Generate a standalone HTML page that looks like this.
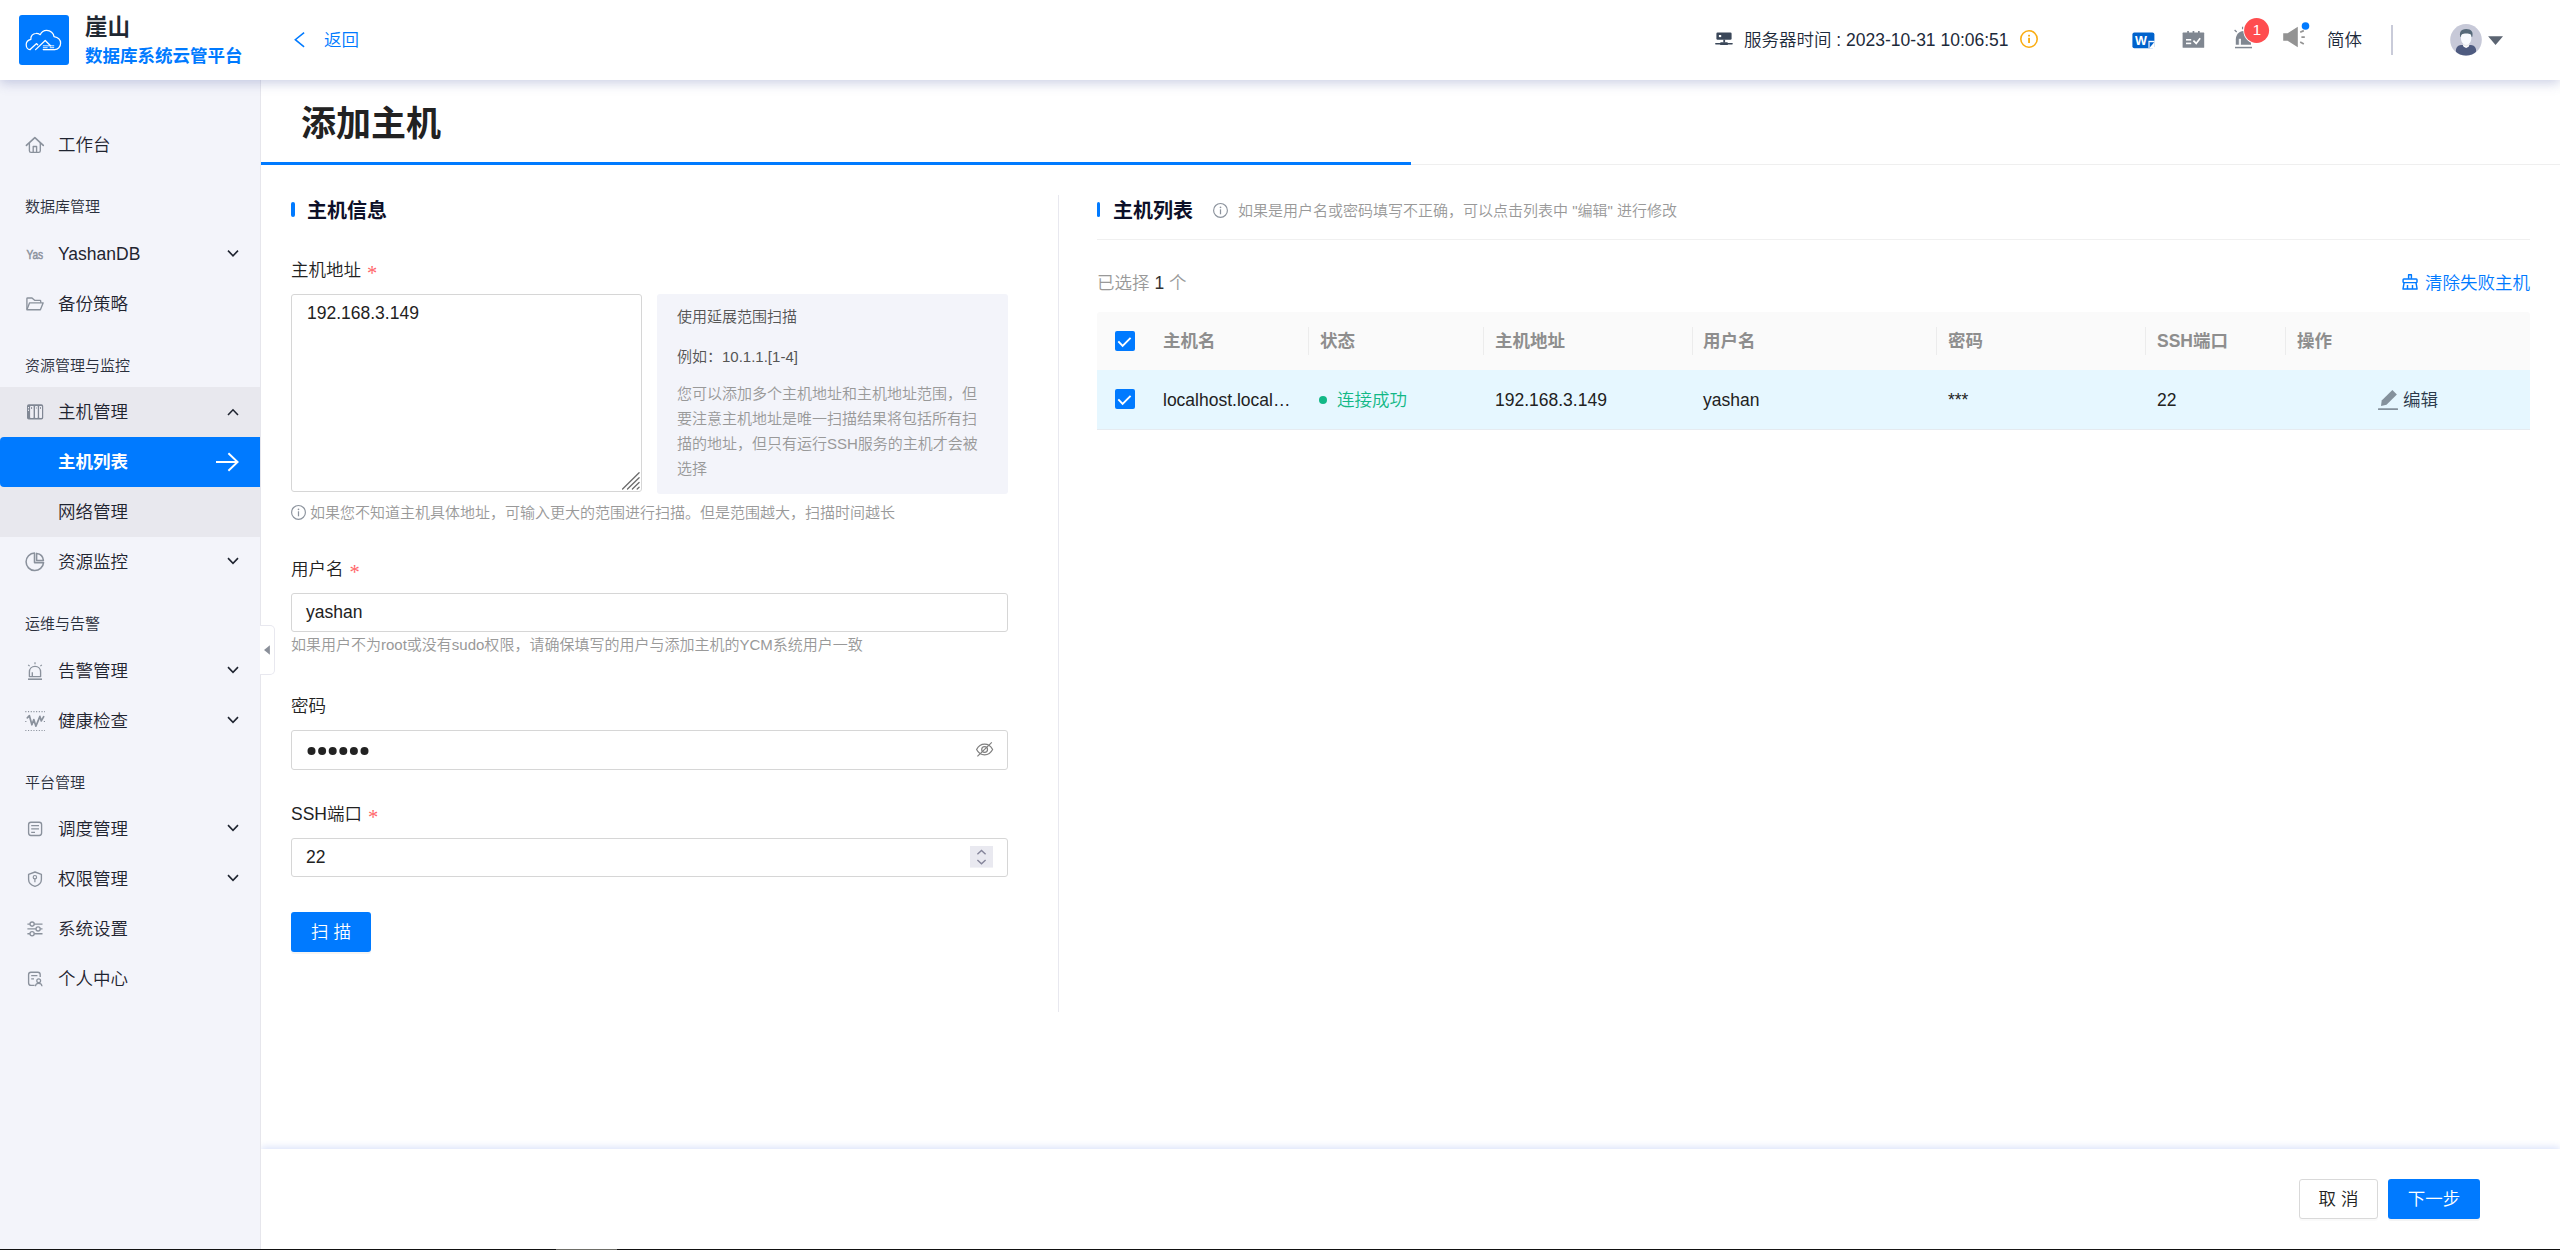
<!DOCTYPE html>
<html lang="zh-CN">
<head>
<meta charset="utf-8">
<title>添加主机</title>
<style>
*{box-sizing:border-box;margin:0;padding:0}
html,body{width:2560px;height:1250px;overflow:hidden;background:#fff}
body{position:relative;font-weight:350;font-family:"Liberation Sans","Noto Sans CJK SC",sans-serif;font-size:17.5px;color:#222;line-height:1}
.abs{position:absolute}
.t{position:absolute;white-space:nowrap;line-height:26px;height:26px}
svg{display:block;position:absolute;overflow:visible}
/* header */
#hd{position:absolute;left:0;top:0;width:2560px;height:80px;background:#fff;box-shadow:0 3px 11px rgba(84,95,165,.30);z-index:20}
#logo{position:absolute;left:19px;top:15px;width:50px;height:50px;border-radius:3px;background:#007aff}
/* sidebar */
#sb{position:absolute;left:0;top:80px;width:261px;height:1169px;background:#f3f4fa;border-right:1px solid #e6e6ec;z-index:12}
.mi{position:absolute;left:58px;font-size:17.5px;color:#1f2430;white-space:nowrap;height:26px;line-height:26px}
.gt{position:absolute;left:25px;font-size:15px;color:#2a2f3c;white-space:nowrap;height:22px;line-height:22px}
.ic{position:absolute;left:26px;width:18px;height:18px}
/* main */
#main{position:absolute;left:261px;top:80px;width:2299px;height:1169px;background:#fff}
.lbl{position:absolute;left:291px;font-size:17.5px;color:#222;white-space:nowrap;height:26px;line-height:26px}
.req{color:#ff6669;font-family:"Liberation Serif","Noto Serif CJK SC",serif;font-size:20.5px;margin-left:6px;position:relative;top:3.5px;line-height:1}
.inp{position:absolute;left:291px;width:717px;height:40px;border:1px solid #d6d6d6;border-radius:3px;background:#fff}
.inp span{position:absolute;left:14px;top:5px;height:26px;line-height:26px;font-size:17.5px;color:#222}
.help{position:absolute;font-size:15px;color:#999;white-space:nowrap;height:22px;line-height:22px}
.th{position:absolute;top:328px;font-weight:bold;font-size:17.5px;color:#8e8e8e;height:26px;line-height:26px;white-space:nowrap}
.td{position:absolute;top:387px;font-size:17.5px;color:#222;height:26px;line-height:26px;white-space:nowrap}
.sep{position:absolute;top:327px;width:1px;height:28px;background:#ececec}
.cb{position:absolute;left:1115px;width:20px;height:20px;border-radius:2px;background:#007aff}
</style>
</head>
<body>

<!-- ================= HEADER ================= -->
<div id="hd">
  <div id="logo"></div>
  <div class="t" style="left:85px;top:13px;font-size:22.5px;font-weight:bold;color:#1f2833;height:30px;line-height:30px">崖山</div>
  <div class="t" style="left:85px;top:43px;font-size:17.5px;font-weight:bold;color:#007aff">数据库系统云管平台</div>
  <div class="t" style="left:324px;top:27px;color:#007aff">返回</div>
  <div class="t" style="left:1744px;top:27px;color:#1d2a3a">服务器时间 : 2023-10-31 10:06:51</div>
  <div class="t" style="left:2327px;top:27px;color:#1d2a3a">简体</div>
  <div class="abs" style="left:2391px;top:25px;width:2px;height:30px;background:#c9cbd9"></div>
</div>

<!-- ================= SIDEBAR ================= -->
<div id="sb">
  <div class="abs" style="left:0;top:307px;width:260px;height:150px;background:#e8e8ee"></div>
  <div class="abs" style="left:0;top:357px;width:260px;height:50px;background:#007aff;border-radius:4px 0 0 4px"></div>

  <div class="mi" style="top:52px">工作台</div>
  <div class="gt" style="top:116px">数据库管理</div>
  <div class="mi" style="top:161px">YashanDB</div>
  <div class="mi" style="top:211px">备份策略</div>
  <div class="gt" style="top:275px">资源管理与监控</div>
  <div class="mi" style="top:319px">主机管理</div>
  <div class="mi" style="top:369px;color:#fff;font-weight:bold">主机列表</div>
  <div class="mi" style="top:419px">网络管理</div>
  <div class="mi" style="top:469px">资源监控</div>
  <div class="gt" style="top:533px">运维与告警</div>
  <div class="mi" style="top:578px">告警管理</div>
  <div class="mi" style="top:628px">健康检查</div>
  <div class="gt" style="top:692px">平台管理</div>
  <div class="mi" style="top:736px">调度管理</div>
  <div class="mi" style="top:786px">权限管理</div>
  <div class="mi" style="top:836px">系统设置</div>
  <div class="mi" style="top:886px">个人中心</div>
</div>

<!-- collapse tab -->
<div class="abs" style="left:260px;top:625px;width:15px;height:50px;background:#fff;border:1px solid #e8e8ef;border-left:none;border-radius:0 5px 5px 0;z-index:13"></div>

<!-- ================= MAIN ================= -->
<div id="main"></div>
<div class="t" style="left:301px;top:99px;font-size:35px;font-weight:bold;color:#222;height:50px;line-height:50px">添加主机</div>
<div class="abs" style="left:1411px;top:164px;width:1149px;height:1px;background:#efefef"></div>
<div class="abs" style="left:261px;top:162px;width:1150px;height:3px;background:#007aff"></div>

<!-- left form -->
<div class="abs" style="left:291px;top:202px;width:4px;height:15px;border-radius:2px;background:#007aff"></div>
<div class="t" style="left:307px;top:196px;font-size:20px;font-weight:bold;color:#0d1029;height:30px;line-height:30px">主机信息</div>

<div class="lbl" style="top:257px">主机地址<span class="req">*</span></div>
<div class="abs" style="left:291px;top:294px;width:351px;height:198px;border:1px solid #d6d6d6;border-radius:3px;background:#fff">
  <span class="t" style="left:15px;top:5px;color:#222">192.168.3.149</span>
</div>
<div class="abs" style="left:657px;top:294px;width:351px;height:200px;border-radius:3px;background:#f3f4fa">
  <div class="help" style="left:20px;top:12px;color:#555">使用延展范围扫描</div>
  <div class="help" style="left:20px;top:52px;color:#555">例如：10.1.1.[1-4]</div>
  <div class="abs" style="left:20px;top:87px;width:311px;font-size:15px;line-height:25px;color:#999">您可以添加多个主机地址和主机地址范围，但要注意主机地址是唯一扫描结果将包括所有扫描的地址，但只有运行SSH服务的主机才会被选择</div>
</div>
<div class="help" style="left:310px;top:502px">如果您不知道主机具体地址，可输入更大的范围进行扫描。但是范围越大，扫描时间越长</div>

<div class="lbl" style="top:556px">用户名<span class="req">*</span></div>
<div class="inp" style="top:593px;height:39px"><span>yashan</span></div>
<div class="help" style="left:291px;top:634px">如果用户不为root或没有sudo权限，请确保填写的用户与添加主机的YCM系统用户一致</div>

<div class="lbl" style="top:693px">密码</div>
<div class="inp" style="top:730px"></div>

<div class="lbl" style="top:801px">SSH端口<span class="req">*</span></div>
<div class="inp" style="top:838px;height:39px"><span>22</span></div>

<div class="abs" style="left:291px;top:912px;width:80px;height:40px;border-radius:3px;background:#007aff;box-shadow:0 2px 0 rgba(0,0,0,.045);color:#fff;text-align:center;line-height:40px;font-size:17.5px">扫 描</div>

<div class="abs" style="left:1058px;top:195px;width:1px;height:817px;background:#e8e8ef"></div>

<!-- right panel -->
<div class="abs" style="left:1097px;top:202px;width:3px;height:15px;border-radius:2px;background:#007aff"></div>
<div class="t" style="left:1113px;top:196px;font-size:20px;font-weight:bold;color:#0d1029;height:30px;line-height:30px">主机列表</div>
<div class="help" style="left:1238px;top:200px">如果是用户名或密码填写不正确，可以点击列表中 "编辑" 进行修改</div>
<div class="abs" style="left:1097px;top:239px;width:1433px;height:1px;background:#f0f0f0"></div>
<div class="t" style="left:1097px;top:270px;color:#999">已选择 <span style="color:#333">1</span> 个</div>
<div class="t" style="left:2425px;top:270px;color:#007aff">清除失败主机</div>

<div class="abs" style="left:1097px;top:312px;width:1433px;height:58px;background:#fafafa;border-radius:3px 3px 0 0"></div>
<div class="abs" style="left:1097px;top:370px;width:1433px;height:60px;background:#e6f7ff;border-bottom:1px solid #e6ebf0"></div>
<div class="cb" style="top:331px"></div>
<div class="cb" style="top:389px"></div>
<div class="th" style="left:1163px">主机名</div>
<div class="th" style="left:1320px">状态</div>
<div class="th" style="left:1495px">主机地址</div>
<div class="th" style="left:1703px">用户名</div>
<div class="th" style="left:1948px">密码</div>
<div class="th" style="left:2157px">SSH端口</div>
<div class="th" style="left:2297px">操作</div>
<div class="sep" style="left:1308px"></div>
<div class="sep" style="left:1483px"></div>
<div class="sep" style="left:1692px"></div>
<div class="sep" style="left:1936px"></div>
<div class="sep" style="left:2145px"></div>
<div class="sep" style="left:2285px"></div>
<div class="td" style="left:1163px">localhost.local…</div>
<div class="abs" style="left:1319px;top:396px;width:8px;height:8px;border-radius:50%;background:#12b886"></div>
<div class="td" style="left:1337px;color:#12b886">连接成功</div>
<div class="td" style="left:1495px">192.168.3.149</div>
<div class="td" style="left:1703px">yashan</div>
<div class="td" style="left:1948px">***</div>
<div class="td" style="left:2157px">22</div>
<div class="td" style="left:2403px;color:#2c3a4a">编辑</div>

<!-- ================= FOOTER ================= -->
<div class="abs" style="left:261px;top:1149px;width:2299px;height:100px;background:#fff;box-shadow:0 -2px 7px rgba(70,110,230,.2);z-index:8"></div>
<div class="abs" style="left:2299px;top:1179px;width:79px;height:40px;border:1px solid #d9d9d9;border-radius:3px;background:#fff;box-shadow:0 2px 0 rgba(0,0,0,.02);color:#222;text-align:center;line-height:38px;z-index:9">取 消</div>
<div class="abs" style="left:2388px;top:1179px;width:92px;height:40px;border-radius:3px;background:#007aff;box-shadow:0 2px 0 rgba(0,0,0,.045);color:#fff;text-align:center;line-height:40px;z-index:9">下一步</div>
<div class="abs" style="left:0;top:1249px;width:2560px;height:1px;background:#111;z-index:30"></div>
<div class="abs" style="left:556px;top:1249px;width:61px;height:1px;background:#6e6e68;z-index:31"></div>

<!-- ================= ICON OVERLAY (page coordinates) ================= -->
<svg id="ov" width="2560" height="1250" viewBox="0 0 2560 1250" style="left:0;top:0;z-index:50;pointer-events:none" fill="none">
  <!-- logo cloud -->
  <g transform="translate(19,15)" stroke="#fff" stroke-width="1.25" stroke-linecap="round" stroke-linejoin="round">
    <path d="M11.1 34.6C8.6 34.6 7.2 32.2 7.2 29.8C7.2 27 9.2 24.9 11.9 24.3C11.6 21 13.8 18.6 16.8 18.5C18.6 18.4 20.2 19 21.2 19.7C22.4 17 24.8 15.4 27.7 15.4C31.6 15.4 34.6 18.2 35 21.6C38.8 22.2 41.6 24.8 41.6 28.3C41.6 31.8 39 34.6 35.8 34.6H24.3"/>
    <path d="M11.1 34.6L17.6 28.6L18.7 29.8M16.6 34.6L26.2 25.5L31.5 30.7" stroke-width="1.3"/>
    <path d="M24.3 30.8H34.8M24.3 32.7H28.2M31.2 32.7H34.8M24.3 34.6H35.8" stroke-width="0.9"/>
  </g>
  <!-- back arrow -->
  <path d="M304.1 32.6L295.3 39.7L304.1 46.8" stroke="#007aff" stroke-width="1.5"/>
  <!-- server icon -->
  <g fill="#3a4759">
    <rect x="1716.4" y="32.6" width="15.2" height="7.2" rx="1.2"/>
    <rect x="1723.3" y="39.6" width="1.8" height="3"/>
    <rect x="1720" y="42.2" width="8" height="2.9" rx="1.2"/>
    <rect x="1715.1" y="43" width="17.7" height="1.5" rx=".7"/>
    <rect x="1718.9" y="35" width="2.3" height="2.1" fill="#fff"/>
  </g>
  <!-- info orange -->
  <circle cx="2029" cy="39" r="8.2" stroke="#faad14" stroke-width="1.6"/>
  <rect x="2028.1" y="34.8" width="1.9" height="1.7" fill="#faad14"/>
  <rect x="2028.1" y="37.8" width="1.9" height="5.2" fill="#faad14"/>
  <!-- word icon -->
  <rect x="2132.4" y="32.6" width="22" height="15.6" rx="2" fill="#0062cc"/>
  <path d="M2148.4 48.4V40.8H2154.6V48.4Z" fill="#fff"/>
  <path d="M2149.8 42.2H2154.2L2149.8 47.6Z" fill="#0062cc"/>
  <rect x="2148.3" y="42" width="1.5" height="6.3" fill="#8fb5e8"/>
  <text x="2134.9" y="44.8" font-family="Liberation Sans, sans-serif" font-weight="bold" font-size="12.6" fill="#fff">W</text>
  <!-- calendar icon -->
  <g fill="#808791">
    <rect x="2182.6" y="32.6" width="21.6" height="15.2" rx=".6"/>
    <rect x="2187.2" y="31" width="1.7" height="2.4"/>
    <rect x="2192.6" y="31" width="1.7" height="2.4"/>
    <rect x="2198" y="31" width="1.7" height="2.4"/>
  </g>
  <rect x="2186" y="39" width="5.2" height="1.6" fill="#fff"/>
  <rect x="2186" y="42.6" width="5.2" height="1.6" fill="#fff"/>
  <path d="M2193.4 40.6L2196.2 43.4L2200.2 38.2" stroke="#fff" stroke-width="1.7"/>
  <!-- alarm (header) -->
  <g fill="#808791">
    <path d="M2235.8 44.8V39.5C2235.8 34.8 2239 31.2 2243.4 31C2247.8 31.2 2251 34.8 2251 39.5V44.8Z"/>
    <rect x="2235" y="46.8" width="17" height="1.5"/>
  </g>
  <rect x="2238.8" y="38.8" width="2.2" height="6.2" fill="#eef0f3"/>
  <path d="M2234.6 30L2236.7 31.9M2242.6 26.8V29.2" stroke="#808791" stroke-width="1.3"/>
  <circle cx="2256.6" cy="30.5" r="13.3" fill="#fff"/>
  <circle cx="2256.6" cy="30.5" r="12.5" fill="#ff4d4f"/>
  <!-- speaker -->
  <path d="M2283.2 33.2H2287.6L2297.8 26.8V47.2L2287.6 40.8H2283.2Z" fill="#939393"/>
  <path d="M2300.2 32.2L2303.8 30.6M2301.4 37.2H2304.8M2300.2 42L2303.8 44" stroke="#939393" stroke-width="1.7"/>
  <circle cx="2305.5" cy="26" r="3.8" fill="#007aff"/>
  <!-- avatar -->
  <g>
    <circle cx="2466" cy="39.9" r="15.8" fill="#c7c9d8"/>
    <clipPath id="avc"><circle cx="2466" cy="39.9" r="15.6"/></clipPath>
    <g clip-path="url(#avc)">
      <path d="M2455.9 56V50.5C2455.9 47.5 2458 45.2 2461 45H2471C2474 45.2 2476.1 47.5 2476.1 50.5V56Z" fill="#4e5b80"/>
      <path d="M2462.6 44.5H2469.6L2468.6 46.8L2466.1 48L2463.6 46.8Z" fill="#fff"/>
      <path d="M2463.6 42.5H2468.8V45.4L2466.2 46.4L2463.6 45.4Z" fill="#e8eaec"/>
      <path d="M2461 36C2461 32.8 2463 31.5 2466.1 31.5C2469.3 31.5 2471.3 32.8 2471.3 36V38.5C2471.3 42 2469 44.8 2466.1 44.8C2463.3 44.8 2461 42 2461 38.5Z" fill="#f8fbff"/>
      <path d="M2460.3 37C2459.3 33 2460.3 29 2466.2 29C2471.5 29 2473.6 32 2472.2 37L2471.3 36.6C2471.5 34.5 2470.5 33.4 2466.2 33.4C2462.2 33.4 2460.9 34.5 2461.1 36.6Z" fill="#566a7a"/>
    </g>
  </g>
  <path d="M2488.1 36.2H2503L2495.55 45Z" fill="#5b6472"/>

  <!-- ===== sidebar icons ===== -->
  <g stroke="#8a919c" stroke-width="1.35" stroke-linejoin="round" stroke-linecap="butt">
    <!-- home -->
    <path d="M26.4 145.4L34.85 137.7L43.3 145.4" stroke-linecap="round" stroke-width="1.6"/>
    <path d="M29.4 143V150.8C29.4 151.8 30 152.4 31 152.4H38.7C39.7 152.4 40.3 151.8 40.3 150.8V143"/>
    <path d="M33.2 152.4V146.5H36.6V152.4"/>
    <!-- folder open -->
    <path d="M26.9 309.6V298.6C26.9 298.2 27.2 298 27.6 298H32L34.6 300.3H40C40.4 300.3 40.7 300.6 40.7 301V302.8"/>
    <path d="M26.9 309.7L29.6 302.8H43.2L40.4 309.7Z"/>
    <!-- pie -->
    <path d="M34.5 553.1A8.75 8.75 0 1 0 43.55 562.6H34.5Z" stroke-width="1.55"/>
    <path d="M36.6 553.4V560.4H43.4C43.1 556.6 40.3 553.8 36.6 553.4Z" stroke-width="1.55"/>
    <!-- alert -->
    <path d="M29.4 676.6V672C29.4 668.6 31.8 666.3 35 666.3C38.2 666.3 40.6 668.6 40.6 672V676.6Z"/>
    <path d="M32.3 676.4V672.3"/>
    <path d="M28 679.2H42" stroke-width="1.6"/>
    <path d="M35 662.2V664.2M28.2 664.8L29.6 666.2M41.8 664.8L40.4 666.2" stroke-width="1.2"/>
    <!-- doc -->
    <rect x="28.6" y="822.2" width="13" height="13.3" rx="2.4"/>
    <path d="M31.2 825.6H39M31.2 828.9H39M31.2 832.3H35" stroke-width="1.3"/>
    <!-- shield -->
    <path d="M35 872L41.4 874.3V879.5C41.4 883 38.8 885.2 35 886.4C31.2 885.2 28.6 883 28.6 879.5V874.3Z"/>
    <circle cx="34.9" cy="877.2" r="1.7" stroke-width="1.2"/>
    <path d="M34.9 879V882.2" stroke-width="1.2"/>
    <!-- sliders -->
    <path d="M27.4 924.1H29.9M34.3 924.1H42.5M27.4 928.9H35.9M40.3 928.9H42.5M27.4 933.7H29.9M34.3 933.7H42.5"/>
    <circle cx="32.1" cy="924.1" r="2.1"/><circle cx="38.1" cy="928.9" r="2.1"/><circle cx="32.1" cy="933.7" r="2.1"/>
    <!-- person card -->
    <path d="M34.6 985.4H31C29.6 985.4 28.6 984.4 28.6 983V974.6C28.6 973.2 29.6 972.2 31 972.2H37.8C39.2 972.2 40.2 973.2 40.2 974.6V977"/>
    <path d="M31.2 975.7H37.4M31.2 978.9H34" stroke-width="1.3"/>
    <circle cx="38.7" cy="980.7" r="1.9" stroke-width="1.25"/>
    <path d="M35.4 986.2C35.6 984.2 37 983.3 38.7 983.3C40.4 983.3 41.8 984.2 42 986.2" stroke-width="1.25"/>
  </g>
  <!-- Yas text logo -->
  <text x="26.4" y="258.7" font-family="Liberation Sans, sans-serif" font-weight="normal" font-size="13" fill="#8a919c" stroke="#8a919c" stroke-width=".5" textLength="16.8" lengthAdjust="spacingAndGlyphs">Yas</text>
  <!-- host icon -->
  <rect x="27" y="404.3" width="16.2" height="15.2" rx="1.8" fill="#808794"/>
  <g fill="#eeeef4">
    <rect x="30.1" y="406" width="3.5" height="11.9" rx=".6"/>
    <rect x="35" y="406" width="2.8" height="11.9" rx=".6"/>
    <rect x="39.1" y="406" width="2.9" height="11.9" rx=".6"/>
    <rect x="28" y="407" width="1" height="1.3"/><rect x="28" y="409.6" width="1" height="1.3"/>
  </g>
  <g fill="#808794"><ellipse cx="31.6" cy="408" rx=".6" ry=".9"/><ellipse cx="36.3" cy="408" rx=".5" ry=".9" fill="#a9aeb8"/><ellipse cx="40.5" cy="408" rx=".55" ry=".9"/></g>
  <!-- health icon -->
  <g stroke="#8a919c">
    <path d="M25.3 711.6H45M25.3 730.5H45" stroke-width="1.2" stroke-dasharray="1.1 1.6"/>
    <path d="M25.2 721.5H26.4M43.8 721.5H45" stroke-width="1.2"/>
    <path d="M27.3 717.8L29.4 715.7L31.9 724.8L33.8 719.6L35.9 726.2L39.9 716.4L41.3 720.9L43.7 716.7" stroke-width="1.7" stroke-linejoin="round" stroke-linecap="round"/>
  </g>
  <!-- chevrons -->
  <g stroke="#1f2430" stroke-width="1.6">
    <path d="M228 250.6L233 255.8L238 250.6"/>
    <path d="M228 415L233 409.8L238 415"/>
    <path d="M228 558.1L233 563.3L238 558.1"/>
    <path d="M228 667.1L233 672.3L238 667.1"/>
    <path d="M228 717.1L233 722.3L238 717.1"/>
    <path d="M228 825.1L233 830.3L238 825.1"/>
    <path d="M228 875.1L233 880.3L238 875.1"/>
  </g>
  <path d="M216 462H237.4M228.4 453.2L237.6 462L228.4 470.8" stroke="#fff" stroke-width="1.9"/>
  <!-- collapse triangle -->
  <path d="M264 650L269.9 645.3V654.8Z" fill="#8a8f99"/>

  <!-- ===== form icons ===== -->
  <g stroke="#6b6b6b" stroke-width="1.3" stroke-linecap="round">
    <path d="M622.6 489L639.1 472.7M627.5 489L639.1 477.7M632.4 489L639.1 482.5M637.2 489L639.1 487.3"/>
  </g>
  <circle cx="298.5" cy="512.4" r="6.9" stroke="#8c939d" stroke-width="1.15"/>
  <circle cx="298.5" cy="509.3" r=".85" fill="#8c939d"/>
  <path d="M298.5 511.3V516.3" stroke="#8c939d" stroke-width="1.25"/>
  <!-- eye invisible -->
  <g stroke="#7f7f7f" stroke-width="1.2">
    <path d="M976.6 749.5C978.6 745.6 981.4 744.2 984.6 744.2C987.8 744.2 990.6 745.6 992.6 749.5C990.6 753.4 987.8 754.8 984.6 754.8C981.4 754.8 978.6 753.4 976.6 749.5Z"/>
    <circle cx="984.6" cy="749.5" r="2.9"/>
    <path d="M977.4 756.4L991.8 742.4"/>
  </g>
  <!-- spinner -->
  <rect x="970" y="846" width="23" height="21.6" fill="#e9e9f0"/>
  <path d="M977.4 854.2L981.5 850.4L985.6 854.2M977.4 860L981.5 863.8L985.6 860" stroke="#85859a" stroke-width="1.4"/>
  <!-- password dots -->
  <g fill="#222"><circle cx="311.5" cy="751" r="4"/><circle cx="322.1" cy="751" r="4"/><circle cx="332.7" cy="751" r="4"/><circle cx="343.3" cy="751" r="4"/><circle cx="353.9" cy="751" r="4"/><circle cx="364.5" cy="751" r="4"/></g>

  <!-- ===== right panel icons ===== -->
  <circle cx="1220.5" cy="210.4" r="6.9" stroke="#8c939d" stroke-width="1.15"/>
  <circle cx="1220.5" cy="207.3" r=".85" fill="#8c939d"/>
  <path d="M1220.5 209.3V214.3" stroke="#8c939d" stroke-width="1.25"/>
  <!-- checks -->
  <path d="M1118.3 341.4L1122.6 345.9L1130.6 337.8" stroke="#fff" stroke-width="1.9"/>
  <path d="M1118.3 399.4L1122.6 403.9L1130.6 395.8" stroke="#fff" stroke-width="1.9"/>
  <!-- broom -->
  <g stroke="#007aff" stroke-width="1.45" stroke-linejoin="round">
    <path d="M2408.6 278.8V274.8H2411.4V278.8"/>
    <rect x="2403.1" y="278.9" width="13.9" height="3.7" rx=".8"/>
    <path d="M2404.1 282.7L2403 289H2417.1L2416 282.7"/>
    <path d="M2407.5 285V289M2412.5 285V289"/>
  </g>
  <!-- edit -->
  <path d="M2392.4 389.9L2396.9 394.4L2386.5 404.7L2381 405.9L2381.7 400.5Z" fill="#84919c"/>
  <rect x="2378" y="408.2" width="20" height="1.8" rx=".5" fill="#84919c"/>
</svg>

<div class="abs" style="left:2252.5px;top:21px;width:9px;height:18px;line-height:18px;font-size:15px;color:#fff;text-align:center;z-index:60">1</div>
</body>
</html>
